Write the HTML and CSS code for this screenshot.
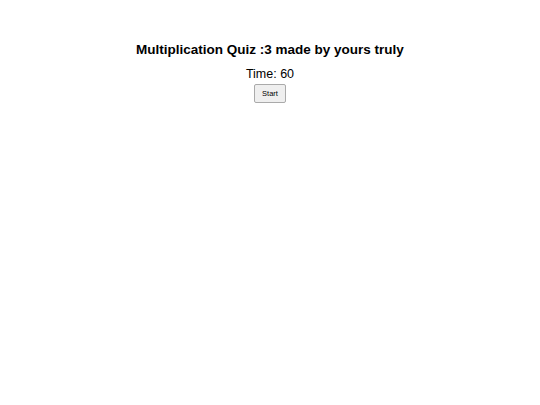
FILE: index.html
```html
<!DOCTYPE html>
<html>
<head>
<meta charset="utf-8">
<link rel="stylesheet" href="styles.css">
</head>
<body>
<div class="quiz">
  <h1 class="title">Multiplication Quiz :3 made by yours truly</h1>
  <div class="timer">Time: 60</div>
  <button class="start">Start</button>
</div>
</body>
</html>
```
FILE: styles.css
```css
body {
  margin: 0;
  font-family: "Liberation Sans", Arial, sans-serif;
  background: #fff;
  color: #000;
}
.quiz {
  display: flex;
  flex-direction: column;
  align-items: center;
  padding-top: 42px;
}
.title {
  font-size: 13.5px;
  font-weight: bold;
  margin: 0 0 10px;
  color: #000;
}
.timer {
  font-size: 12.5px;
  margin-bottom: 3px;
  color: #000;
}
.start {
  font-family: "Liberation Sans", Arial, sans-serif;
  font-size: 7.5px;
  line-height: 9px;
  padding: 4px 7px;
  background: #efefef;
  border: 1px solid #aaaaaa;
  border-radius: 2px;
  color: #000;
}
```
